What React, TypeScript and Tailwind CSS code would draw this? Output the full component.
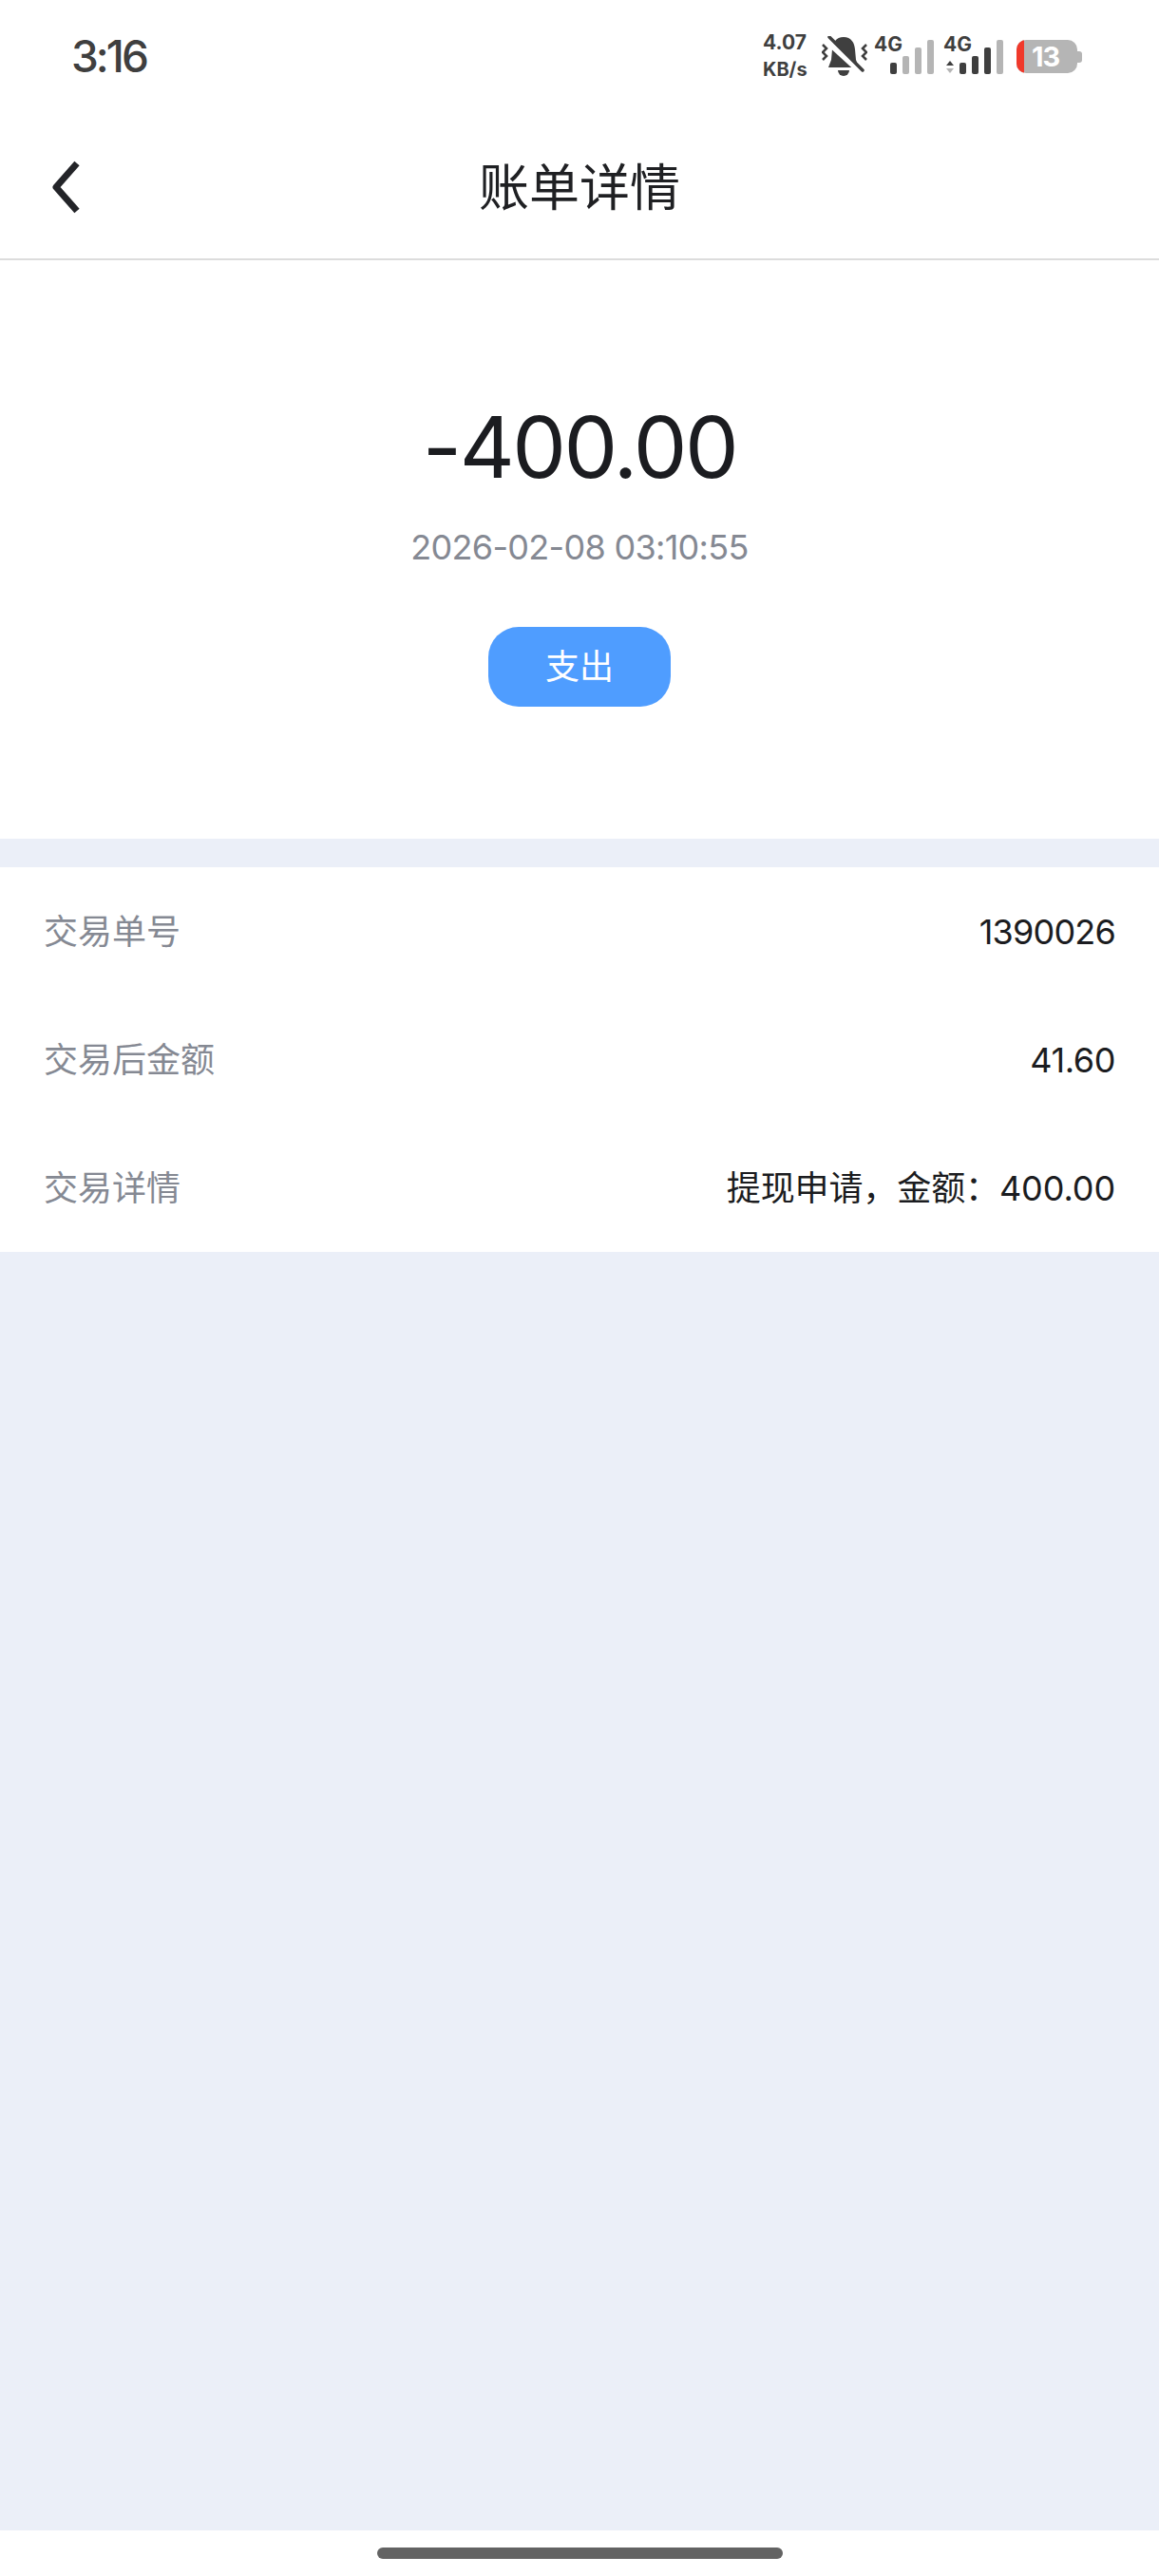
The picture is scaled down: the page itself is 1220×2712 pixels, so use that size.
import React from 'react';

const FONT = "font-['Inter','Noto_Sans_CJK_SC',sans-serif]";

interface Row {
  label: string;
  value: string;
  tracking: string;
}

const rows: Row[] = [
  { label: '交易单号', value: '1390026', tracking: 'tracking-[-0.800px]' },
  { label: '交易后金额', value: '41.60', tracking: 'tracking-[-0.400px]' },
  { label: '交易详情', value: '提现申请，金额：400.00', tracking: 'tracking-[-0.100px]' },
];

const BellOff = () => (
  <svg width="48" height="44" viewBox="0 0 48 44" className="block">
    {/* bell */}
    <path d="M23 1c8 0 11.500 6 12 13l1 11 3 8H7l3-8 1-11C11.500 7 15 1 23 1z" fill="#3f3f3f" />
    <path d="M17 36h12a6 6 0 0 1-12 0z" fill="#3f3f3f" />
    {/* slash */}
    <path d="M5 5l34 31" stroke="#ffffff" strokeWidth="6" />
    <path d="M8 1l35 35" stroke="#3f3f3f" strokeWidth="3.500" strokeLinecap="round" />
    {/* vibrate marks */}
    <path d="M1 9l4 4-4 4 4 4-4 4M47 9l-4 4 4 4-4 4 4 4" fill="none" stroke="#3f3f3f" strokeWidth="2.500" />
  </svg>
);

const Signal = ({ active, arrows }: { active: number; arrows?: boolean }) => {
  const bars = [
    { x: 17, y: 34, h: 12 },
    { x: 30, y: 27, h: 19 },
    { x: 43, y: 18, h: 28 },
    { x: 56, y: 10, h: 36 },
  ];
  return (
    <svg width="63" height="48" viewBox="0 0 63 48" className="block">
      <text x="0" y="22" fontSize="21" fontWeight="700" fill="#3f3f3f" fontFamily="Inter, sans-serif">
        4G
      </text>
      {arrows && (
        <>
          <path d="M3 37l4-5 4 5z" fill="#3f3f3f" />
          <path d="M3 40l4 5 4-5z" fill="#b5b5b5" />
        </>
      )}
      {bars.map((b, i) => (
        <rect key={i} x={b.x} y={b.y} width="7" height={b.h} rx="2" fill={i < active ? '#3f3f3f' : '#b5b5b5'} />
      ))}
    </svg>
  );
};

const StatusBar = () => (
  <div className="flex h-[120px] items-start justify-between pl-[75px] pr-[81px] pt-[31px]">
    <span className="text-[46px] leading-[56px] font-medium tracking-[-3px] text-[#3f3f3f]">3:16</span>
    <div className="flex items-start">
      <div className="mr-[12px] flex w-[50px] flex-col items-start text-[21px] leading-[28px] font-bold text-[#3f3f3f]">
        <span>4.07</span>
        <span className="text-[20px]">KB/s</span>
      </div>
      <div className="mr-[7px] mt-[7px]">
        <BellOff />
      </div>
      <div className="mr-[10px] mt-[1px]">
        <Signal active={1} />
      </div>
      <div className="mr-[14px] mt-[1px]">
        <Signal active={3} arrows />
      </div>
      {/* battery */}
      <div className="mt-[11px] flex items-center">
        <div className="flex h-[35px] w-[64px] items-center overflow-hidden rounded-[10px] bg-[#b5b5b5]">
          <div className="h-full w-[8px] bg-[#f0392b]" />
          <span className="ml-[8px] text-[29px] leading-none font-bold tracking-[-1px] text-white">13</span>
        </div>
        <div className="h-[12px] w-[5px] rounded-r-[3px] bg-[#b5b5b5]" />
      </div>
    </div>
  </div>
);

const App = () => {
  return (
    <div className={`flex min-h-[2712px] flex-col bg-white ${FONT}`}>
      <StatusBar />

      {/* Nav */}
      <div className="relative flex h-[154px] items-center justify-center border-b-2 border-[#dcdcdc] pt-[4px]">
        <svg width="34" height="58" viewBox="0 0 34 58" className="absolute left-[52px] top-[48px]">
          <path d="M29 4L7 29l22 25" fill="none" stroke="#232428" strokeWidth="7" strokeLinejoin="round" />
        </svg>
        <span className="text-[53px] leading-none text-[#1f2023]">账单详情</span>
      </div>

      {/* Amount */}
      <div className="flex h-[609px] flex-col items-center pt-[147px]">
        <div className="text-[90px] leading-[100px] tracking-[-2.500px] text-[#1b1c20]">-400.00</div>
        <div className="mt-[30px] text-[36px] leading-[50px] tracking-[-0.700px] text-[#858993]">2026-02-08 03:10:55</div>
        <div className="mt-[59px] flex h-[84px] w-[192px] items-center justify-center rounded-[32px] bg-[#4f9dff] text-[36px] text-white">
          支出
        </div>
      </div>

      <div className="flex flex-1 flex-col bg-[#ebeff8] pt-[30px]">
        <div className="bg-white">
          {rows.map((row) => (
            <div key={row.label} className="flex h-[135px] items-center justify-between px-[46px] text-[36px]">
              <span className="text-[#858993]">{row.label}</span>
              <span className={`${row.tracking} text-[#1b1c20]`}>{row.value}</span>
            </div>
          ))}
        </div>
      </div>

      {/* Home indicator */}
      <div className="flex h-[48px] items-start justify-center bg-white pt-[18px]">
        <div className="h-[12px] w-[427px] rounded-full bg-[#636363]" />
      </div>
    </div>
  );
};

export default App;
